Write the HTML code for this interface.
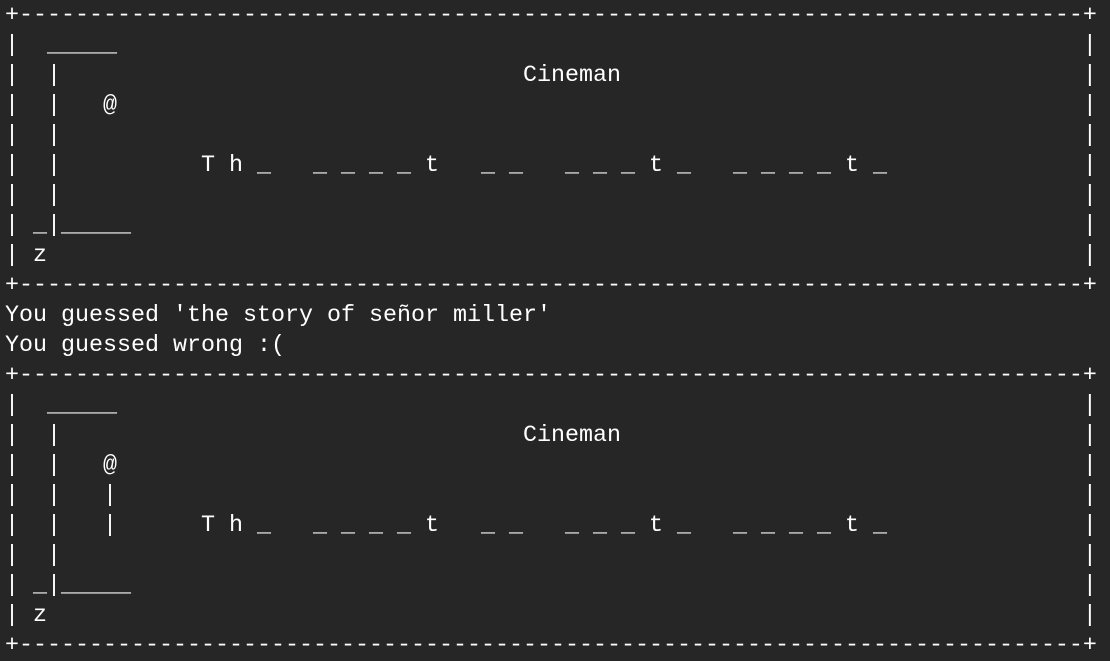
<!DOCTYPE html>
<html><head><meta charset="utf-8"><style>
html,body{margin:0;padding:0;background:#262626;}
body{width:1110px;height:660px;overflow:hidden;position:relative;}
#t{position:absolute;left:5px;top:1px;font-family:"Liberation Mono",monospace;font-size:23.33px;line-height:30px;color:#fff;}
.l{position:relative;height:30px;white-space:pre;}
.r{position:absolute;left:77ch;top:0;}
</style></head><body><div id="t"><div class="l">+----------------------------------------------------------------------------+</div><div class="l">|  _____<span class="r">|</span></div><div class="l">|  |                                 Cineman<span class="r">|</span></div><div class="l">|  |   @<span class="r">|</span></div><div class="l">|  |<span class="r">|</span></div><div class="l">|  |          T h _   _ _ _ _ t   _ _   _ _ _ t _   _ _ _ _ t _<span class="r">|</span></div><div class="l">|  |<span class="r">|</span></div><div class="l">| _|_____<span class="r">|</span></div><div class="l">| z<span class="r">|</span></div><div class="l">+----------------------------------------------------------------------------+</div><div class="l">You guessed 'the story of señor miller'</div><div class="l">You guessed wrong :(</div><div class="l">+----------------------------------------------------------------------------+</div><div class="l">|  _____<span class="r">|</span></div><div class="l">|  |                                 Cineman<span class="r">|</span></div><div class="l">|  |   @<span class="r">|</span></div><div class="l">|  |   |<span class="r">|</span></div><div class="l">|  |   |      T h _   _ _ _ _ t   _ _   _ _ _ t _   _ _ _ _ t _<span class="r">|</span></div><div class="l">|  |<span class="r">|</span></div><div class="l">| _|_____<span class="r">|</span></div><div class="l">| z<span class="r">|</span></div><div class="l">+----------------------------------------------------------------------------+</div></div></body></html>
